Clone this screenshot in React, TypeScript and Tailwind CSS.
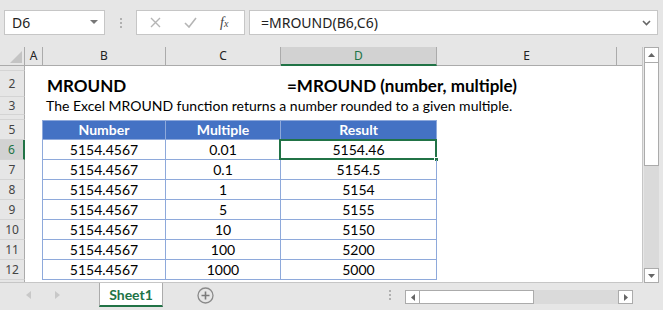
import React from "react";

const CALIBRI = "font-['Lato','Liberation_Sans',sans-serif]";
const UI = "font-['Noto_Sans','Liberation_Sans',sans-serif]";

const COLS = [
  { key: "A", w: "w-[18px]" },
  { key: "B", w: "w-[123px]" },
  { key: "C", w: "w-[115px]" },
  { key: "D", w: "w-[156px]" },
  { key: "E", w: "w-[180px]" },
];

const DATA = [
  ["5154.4567", "0.01", "5154.46"],
  ["5154.4567", "0.1", "5154.5"],
  ["5154.4567", "1", "5154"],
  ["5154.4567", "5", "5155"],
  ["5154.4567", "10", "5150"],
  ["5154.4567", "100", "5200"],
  ["5154.4567", "1000", "5000"],
];

function RowHead({ n, h, active }: { n?: string; h: string; active?: boolean }) {
  return (
    <div
      className={`${h} w-[25px] shrink-0 flex items-center justify-center border-b border-[#d4d4d4] text-[12px] leading-none ${UI} ${
        active
          ? "bg-[#d2d2d2] text-[#217346] border-r-2 border-r-[#217346]"
          : "bg-[#e6e6e6] text-[#444] border-r border-r-[#ababab]"
      }`}
    >
      {n}
    </div>
  );
}

function Dots() {
  return (
    <div className="flex flex-col gap-[2px]">
      <span className="h-[2px] w-[2px] bg-[#b0b0b0]" />
      <span className="h-[2px] w-[2px] bg-[#b0b0b0]" />
      <span className="h-[2px] w-[2px] bg-[#b0b0b0]" />
    </div>
  );
}

export default function App() {
  return (
    <div className="w-[663px] h-[310px] bg-[#e6e6e6] flex flex-col overflow-hidden">
      {/* Formula bar */}
      <div className="h-[47px] flex items-start pt-[10px] shrink-0">
        <div className={`ml-[4px] w-[101px] h-[25px] bg-white border border-[#c6c6c6] flex items-center justify-between pl-[7px] pr-[6px] text-[14px] text-[#222] ${UI}`}>
          <span>D6</span>
          <svg width="8" height="5" viewBox="0 0 8 5">
            <path d="M0 0 L8 0 L4 4 Z" fill="#777" />
          </svg>
        </div>
        <div className="w-[31px] h-[25px] flex items-center justify-center">
          <Dots />
        </div>
        <div className="w-[109px] h-[25px] bg-white border border-[#c6c6c6] flex items-center">
          <svg className="ml-[13px]" width="11" height="11" viewBox="0 0 11 11">
            <path d="M1 1 L10 10 M10 1 L1 10" stroke="#b5b5b5" strokeWidth="1.4" />
          </svg>
          <svg className="ml-[23px]" width="13" height="11" viewBox="0 0 13 11">
            <path d="M1 6 L5 10 L12 1" stroke="#b5b5b5" strokeWidth="1.6" fill="none" />
          </svg>
          <span className="ml-[23px] text-[14px] italic text-[#444] font-['Liberation_Serif',serif] leading-none">
            f<span className="text-[10px]">x</span>
          </span>
        </div>
        <div className={`ml-[4px] w-[409px] h-[25px] bg-white border border-[#c6c6c6] flex items-center justify-between pl-[11px] pr-[6px] text-[14px] text-[#222] ${UI}`}>
          <span>=MROUND(B6,C6)</span>
          <svg width="9" height="6" viewBox="0 0 9 6">
            <path d="M1 1 L4.5 4.5 L8 1" stroke="#666" strokeWidth="1.6" fill="none" />
          </svg>
        </div>
      </div>

      {/* Grid + vertical scrollbar */}
      <div className="flex h-[236px] shrink-0">
        <div className="w-[643px] flex flex-col bg-white border-r border-[#c6c6c6] border-b border-b-[#c6c6c6] overflow-hidden">
          {/* Column headers */}
          <div className={`flex h-[19px] shrink-0 bg-[#e6e6e6] text-[12px] text-[#222] ${UI}`}>
            <div className="w-[25px] shrink-0 flex items-end justify-end p-[2px] border-r border-[#ababab] border-b border-b-[#ababab]">
              <svg width="12" height="12" viewBox="0 0 12 12">
                <path d="M12 0 L12 12 L0 12 Z" fill="#c4c4c4" />
              </svg>
            </div>
            {COLS.map((c) =>
              c.key === "D" ? (
                <div
                  key={c.key}
                  className={`${c.w} shrink-0 flex items-center justify-center bg-[#d2d2d2] text-[#217346] border-r border-r-[#ababab] border-b-2 border-b-[#217346]`}
                >
                  {c.key}
                </div>
              ) : (
                <div
                  key={c.key}
                  className={`${c.w} shrink-0 flex items-center justify-center border-r border-r-[#ababab] border-b border-b-[#ababab]`}
                >
                  {c.key}
                </div>
              )
            )}
            <div className="flex-1 border-b border-b-[#ababab]" />
          </div>

          {/* Row 1 */}
          <div className="flex h-[5px] shrink-0">
            <RowHead h="h-[5px]" />
          </div>
          {/* Row 2 */}
          <div className="flex h-[26px] shrink-0">
            <RowHead n="2" h="h-[26px]" />
            <div className="w-[18px]" />
            <div className={`w-[239px] h-[26px] flex items-center pl-[4px] pt-[2px] text-[17px] leading-none font-bold text-black ${CALIBRI}`}>
              MROUND
            </div>
            <div className={`h-[26px] flex items-center pl-[5px] pt-[2px] text-[17px] leading-none font-bold text-black whitespace-nowrap ${CALIBRI}`}>
              =MROUND (number, multiple)
            </div>
          </div>
          {/* Row 3 */}
          <div className="flex h-[18px] shrink-0">
            <RowHead n="3" h="h-[18px]" />
            <div className="w-[18px]" />
            <div className={`h-[18px] flex items-center pl-[3px] text-[14px] leading-none text-black whitespace-nowrap ${CALIBRI}`}>
              The Excel MROUND function returns a number rounded to a given multiple.
            </div>
          </div>
          {/* Row 4 */}
          <div className="flex h-[5px] shrink-0">
            <RowHead h="h-[5px]" />
          </div>
          {/* Row 5: table header */}
          <div className="flex h-[20px] shrink-0">
            <RowHead n="5" h="h-[20px]" />
            <div className="w-[17px]" />
            <div className={`flex text-[14px] leading-none font-bold text-white ${CALIBRI}`}>
              <div className="w-[124px] h-[20px] flex items-center justify-center bg-[#4472c4] border border-[#8ea9db]">Number</div>
              <div className="w-[115px] h-[20px] flex items-center justify-center bg-[#4472c4] border-y border-r border-[#8ea9db]">Multiple</div>
              <div className="w-[156px] h-[20px] flex items-center justify-center bg-[#4472c4] border-y border-r border-[#8ea9db]">Result</div>
            </div>
          </div>
          {/* Data rows */}
          {DATA.map((r, i) => (
            <div className="flex h-[20px] shrink-0" key={i}>
              <RowHead n={String(6 + i)} h="h-[20px]" active={i === 0} />
              <div className="w-[17px]" />
              <div className={`flex text-[14px] leading-none text-black ${CALIBRI}`}>
                <div className="w-[124px] h-[20px] flex items-center justify-center border-x border-b border-[#8ea9db]">{r[0]}</div>
                <div className="w-[115px] h-[20px] flex items-center justify-center border-r border-b border-[#8ea9db]">{r[1]}</div>
                <div className="relative w-[156px] h-[20px] flex items-center justify-center border-r border-b border-[#8ea9db]">
                  {r[2]}
                  {i === 0 && (
                    <>
                      <div className="absolute -left-[2px] -top-[1px] -right-[1px] -bottom-[1px] border-2 border-[#217346]" />
                      <div className="absolute -right-[3px] -bottom-[3px] w-[5px] h-[5px] bg-[#217346] border border-white" />
                    </>
                  )}
                </div>
              </div>
            </div>
          ))}
          <div className="flex flex-1">
            <div className="w-[25px] bg-[#e6e6e6] border-r border-[#ababab]" />
          </div>
        </div>

        {/* Vertical scrollbar */}
        <div className="w-[20px] flex justify-center pl-[1px] pr-[4px]">
          <div className="w-[15px] flex flex-col bg-[#dadada]">
            <div className="h-[16px] bg-white border border-[#ababab] flex items-center justify-center">
              <svg width="7" height="4" viewBox="0 0 7 4">
                <path d="M0 4 L7 4 L3.5 0 Z" fill="#666" />
              </svg>
            </div>
            <div className="h-[103px] bg-white border-x border-b border-[#ababab]" />
            <div className="flex-1" />
            <div className="h-[15px] bg-white border border-[#ababab] flex items-center justify-center">
              <svg width="7" height="4" viewBox="0 0 7 4">
                <path d="M0 0 L7 0 L3.5 4 Z" fill="#666" />
              </svg>
            </div>
          </div>
        </div>
      </div>

      {/* Sheet tabs + horizontal scrollbar */}
      <div className="h-[27px] flex items-start shrink-0">
        <div className="w-[99px] h-[24px] flex items-center">
          <svg className="ml-[26px]" width="5" height="8" viewBox="0 0 5 8">
            <path d="M5 0 L5 8 L0 4 Z" fill="#c8c8c8" />
          </svg>
          <svg className="ml-[24px]" width="5" height="8" viewBox="0 0 5 8">
            <path d="M0 0 L0 8 L5 4 Z" fill="#c8c8c8" />
          </svg>
        </div>
        <div className={`w-[64px] h-[24px] bg-white border-x border-[#ababab] border-b-2 border-b-[#217346] flex items-center justify-center text-[14px] font-bold text-[#217346] ${CALIBRI}`}>
          Sheet1
        </div>
        <div className="w-[34px]" />
        <div className="h-[24px] flex items-center">
          <svg width="17" height="17" viewBox="0 0 17 17">
            <circle cx="8.5" cy="8.5" r="7.5" stroke="#8a8a8a" strokeWidth="1.3" fill="none" />
            <path d="M8.5 4.5 V12.5 M4.5 8.5 H12.5" stroke="#7a7a7a" strokeWidth="1.6" />
          </svg>
        </div>
        <div className="w-[175px]" />
        <div className="h-[24px] flex items-center">
          <Dots />
        </div>
        <div className="w-[14px]" />
        <div className="mt-[7px] h-[14px] w-[228px] flex bg-[#dadada]">
          <div className="w-[15px] h-full bg-white border border-[#ababab] flex items-center justify-center">
            <svg width="4" height="7" viewBox="0 0 4 7">
              <path d="M4 0 L4 7 L0 3.5 Z" fill="#666" />
            </svg>
          </div>
          <div className="w-[114px] h-full bg-white border-y border-r border-[#ababab]" />
          <div className="flex-1" />
          <div className="w-[15px] h-full bg-white border border-[#ababab] flex items-center justify-center">
            <svg width="4" height="7" viewBox="0 0 4 7">
              <path d="M0 0 L0 7 L4 3.5 Z" fill="#666" />
            </svg>
          </div>
        </div>
      </div>
    </div>
  );
}
